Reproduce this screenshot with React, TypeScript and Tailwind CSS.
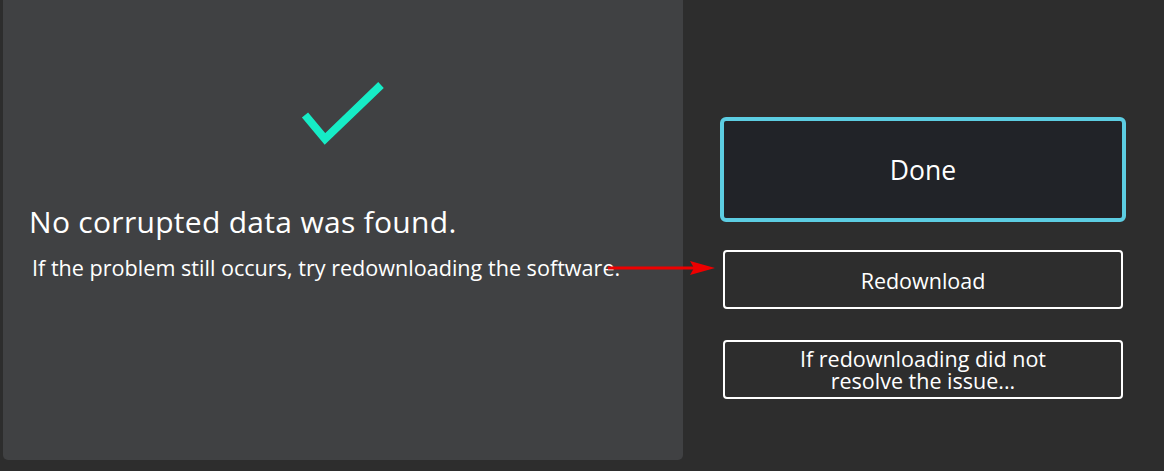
export default function App() {
  return (
    <div
      className="relative flex h-[471px] w-[1164px] overflow-hidden bg-[#2d2d2d] text-white"
      style={{ fontFamily: '"Open Sans", "Noto Sans", sans-serif' }}
    >
      <div className="ml-[3px] flex h-[460px] w-[680px] flex-col rounded-b-[5px] bg-[#404143]">
        <svg className="ml-[295px] mt-[78px]" width="94" height="72" viewBox="0 0 94 72">
          <path d="M7 37 L27 61 L83 7" fill="none" stroke="#16ecc6" strokeWidth="8" strokeLinecap="butt" strokeLinejoin="miter" />
        </svg>
        <h1 className="ml-[26px] mt-[54px] text-[30px] leading-[36px] font-normal tracking-[0.3px]">
          No corrupted data was found.
        </h1>
        <p className="ml-[29px] mt-[15px] text-[21.6px] leading-[26px]">
          If the problem still occurs, try redownloading the software.
        </p>
      </div>

      <div className="ml-[37px] flex w-[406px] flex-col pt-[117px]">
        <button className="flex h-[105px] items-center justify-center rounded-[6px] border-[4px] border-[#5ccde2] bg-[#212328] pt-[3px] text-[26.5px] text-white">
          Done
        </button>
        <button className="mx-[3px] mt-[28px] flex h-[59px] items-center justify-center rounded-[4px] border-2 border-white bg-[#2d2d2d] pt-[3px] text-[21.5px] text-white">
          Redownload
        </button>
        <button className="mx-[3px] mt-[31px] flex h-[59px] flex-col items-center justify-center rounded-[4px] border-2 border-white bg-[#2d2d2d] pt-[1px] text-[21.5px] leading-[22px] text-white">
          <span>If redownloading did not</span>
          <span>resolve the issue...</span>
        </button>
      </div>

      <svg className="absolute left-[608px] top-[260px]" width="110" height="16" viewBox="0 0 110 16">
        <line x1="0" y1="8" x2="86" y2="8" stroke="#ee0000" strokeWidth="3" />
        <polygon points="82,1 107,8 82,15 86,8" fill="#ee0000" />
      </svg>
    </div>
  )
}
